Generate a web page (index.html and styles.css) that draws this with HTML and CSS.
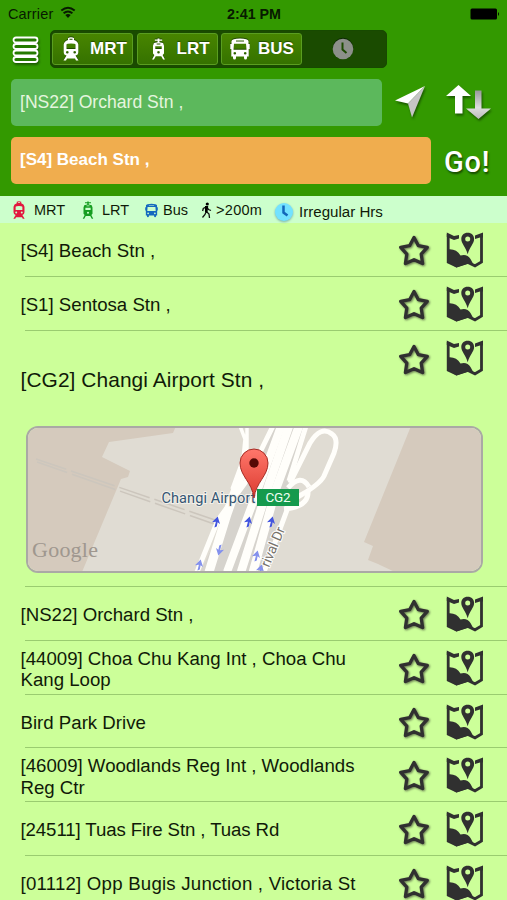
FILE: index.html
```html
<!DOCTYPE html>
<html lang="en">
<head>
<meta charset="utf-8">
<title>Transit planner</title>
<link rel="stylesheet" href="styles.css">
</head>
<body>
<svg class="defs" width="0" height="0" aria-hidden="true">
  <defs>
    <symbol id="star" viewBox="0 0 36 36">
      <path d="M18 4.5L22.4 12.700L31.300 14.300L25.200 21.100L26.600 30.500L18 26.700L9.400 30.500L10.800 21.100L4.700 14.300L13.600 12.700Z" fill="none" stroke="#303030" stroke-width="3.300" stroke-linejoin="round"/>
    </symbol>
    <symbol id="map" viewBox="0 0 38 36">
      <path d="M2.200 2V30L10.500 34L22 30.500L29 33.800L35.500 30V2" fill="none" stroke="#303030" stroke-width="2.800"/>
      <path d="M.8 .5L8 4L13 3V6.500L8 8L.8 5ZM29 3.500L37 .5V5.500L34 5.500L29 7Z" fill="#303030"/>
      <path d="M1 17.500Q10 16 14.500 23.500Q21 21.500 24.500 27L27.500 32.500L22 31.500L10.500 35.500L1 29.500Z" fill="#303030"/>
      <path fill-rule="evenodd" d="M21.700 .8C17.800 .8 15.300 3.500 15.300 7C15.300 11.500 19.500 14.500 21.700 22.300C23.900 14.500 28.100 11.500 28.100 7C28.100 3.500 25.600 .8 21.700 .8ZM21.700 4.400A2.500 2.500 0 1 1 21.700 9.400A2.500 2.500 0 1 1 21.700 4.400Z" fill="#303030"/>
    </symbol>
    <symbol id="train" viewBox="0 0 16 24">
      <path fill="currentColor" fill-rule="evenodd" d="M5 1Q8-.5 11 1V3Q14.800 4 15.300 7.500V15Q15.300 18 12.500 18.500L15.500 23.500H13L12 21.500H4L3 23.500H.5L3.500 18.500Q.7 18 .7 15V7.500Q1.200 4 5 3ZM6.500 1.800V2.800H9.500V1.800ZM3.500 7.500V12H12.500V7.500Q12 6.500 8 6.500T3.500 7.500ZM4.300 14A1.300 1.300 0 1 0 4.300 16.600A1.300 1.300 0 1 0 4.300 14ZM11.700 14A1.300 1.300 0 1 0 11.700 16.600A1.300 1.300 0 1 0 11.700 14Z"/>
    </symbol>
    <symbol id="tram" viewBox="0 0 16 24">
      <path fill="currentColor" fill-rule="evenodd" d="M4 1.500H7V.5H9V1.500H12V3H9V4.500L13 5.500L14 8.500V17L12.500 18.500L15 23.500H13L11 20H5L3 23.500H1L3.500 18.500L2 17V8.500L3 5.500L7 4.500V3H4ZM4.500 9V12H11.500V9ZM8 14.200A1.400 1.400 0 1 0 8 17A1.400 1.400 0 1 0 8 14.200ZM6 6V7H10V6Z"/>
    </symbol>
    <symbol id="bus" viewBox="0 0 20 22">
      <path fill="currentColor" fill-rule="evenodd" d="M1.500 3Q2 .5 10 .5T18.500 3V6H19.700V11H18.700V18.500H17V20Q17 21.500 15.500 21.500T14 20V18.500H6V20Q6 21.500 4.500 21.500T3 20V18.500H1.300V11H.3V6H1.500ZM6 2.500V3.400H14V2.500ZM4 5.800L3.500 11.700H16.500L16 5.800ZM4.800 14A1.300 1.300 0 1 0 4.800 16.600A1.300 1.300 0 1 0 4.800 14ZM15.200 14A1.300 1.300 0 1 0 15.200 16.600A1.300 1.300 0 1 0 15.200 14Z"/>
    </symbol>
    <linearGradient id="metal" x1="0" y1="0" x2="0" y2="1"><stop offset="0" stop-color="#999"/><stop offset=".6" stop-color="#ddd"/><stop offset="1" stop-color="#bbb"/></linearGradient>
    <linearGradient id="pin" x1="0" y1="0" x2="0" y2="1"><stop offset="0" stop-color="#ff776b"/><stop offset="1" stop-color="#dc3b30"/></linearGradient>
    <g id="way"><path d="M-1.600 5.500L-.1-.2L-4 .3L1.700-5.500L4 2L1.600.2L.8 4.500Z"/></g>
  </defs>
</svg>

<div class="app">
  <header class="header">
    <div class="status">
      <div class="carrier">Carrier
        <svg width="16" height="13" viewBox="0 0 16 13"><path d="M1.300 4.600Q8-1 14.700 4.600M3.600 7.300Q8 3.600 12.400 7.300" fill="none" stroke="#071a00" stroke-width="1.900"/><path d="M5.300 9.100Q8 7 10.700 9.100L8 12Z" fill="#071a00"/></svg>
      </div>
      <div class="time">2:41 PM</div>
      <div class="power"><svg width="30" height="12" viewBox="0 0 30 12"><rect x=".5" y=".5" width="26.500" height="11" rx="1.500"/><path d="M28 4Q30 6 28 8Z"/></svg></div>
    </div>
    <div class="toolbar">
      <svg class="menu" width="28" height="28" viewBox="0 0 28 28"><g fill="#247a00" stroke="#fff" stroke-width="1.800"><rect x="1.500" y="1.500" width="24" height="5" rx="2.500"/><rect x="1.500" y="8" width="24" height="5" rx="2.500"/><rect x="1.500" y="14.500" width="24" height="5" rx="2.500"/><rect x="1.500" y="21" width="24" height="5" rx="2.500"/></g></svg>
      <div class="segments">
        <div class="segment"><svg width="16" height="24"><use href="#train"/></svg><span>MRT</span></div>
        <div class="segment seg-lrt"><svg width="15" height="22"><use href="#tram"/></svg><span>LRT</span></div>
        <div class="segment seg-bus"><svg width="20" height="22"><use href="#bus"/></svg><span>BUS</span></div>
        <div class="segment-off"><svg width="22" height="22" viewBox="0 0 22 22"><circle cx="11" cy="11" r="10.300" fill="#8c908a"/><path d="M10.500 4.500V11.500L14.500 15" fill="none" stroke="#1c4a00" stroke-width="2"/></svg></div>
      </div>
    </div>
    <div class="route">
      <div class="field from">[NS22] Orchard Stn ,</div>
      <svg class="shadow locate" width="32" height="34" viewBox="0 0 32 34"><path d="M31 1L1 15.500L14 18.500Z" fill="#fff"/><path d="M31 1L14 18.500L18 32.500Z" fill="#c5c5c5"/></svg>
      <svg class="shadow swap" width="45" height="34" viewBox="0 0 45 34"><path d="M29 5.500H35.500V23.500H45L32.500 34L20 23.500H29Z" fill="url(#metal)"/><path d="M12.500 0L25 11H16.500V28.500H9V11H0Z" fill="#fff"/></svg>
    </div>
    <div class="route">
      <div class="field to">[S4] Beach Stn ,</div>
      <div class="go">Go!</div>
    </div>
  </header>

  <div class="legend">
    <svg class="red" width="12" height="18"><use href="#train"/></svg><span class="l-mrt">MRT</span>
    <svg class="green" width="12" height="18"><use href="#tram"/></svg><span class="l-lrt">LRT</span>
    <svg class="blue" width="13" height="15"><use href="#bus"/></svg><span class="l-bus">Bus</span>
    <svg width="11" height="17" viewBox="0 0 11 17"><circle cx="6.300" cy="2" r="1.600"/><path d="M5.800 4L5.200 9.200L8 12L8.500 16M5.200 9.500L4 12.500L1.500 15.500M5.500 4.700L2.300 6.500L1.600 9M6 5L7.500 7.500L10 8.500" fill="none" stroke="#111" stroke-width="1.300"/><path d="M4 4H7.200L6.500 10H4Z"/></svg><span class="l-walk">&gt;200m</span>
    <svg class="clock" width="20" height="20" viewBox="0 0 20 20"><circle cx="10" cy="10" r="9" fill="#73e2ff"/><path d="M9.500 3.500V10.500L13.500 13.500" fill="none" stroke="#1267ba" stroke-width="2.500"/></svg><span class="l-hours">Irregular Hrs</span>
  </div>

  <main class="list">
    <div class="row"><p>[S4] Beach Stn ,</p><svg class="star"><use href="#star"/></svg><svg class="map"><use href="#map"/></svg></div>
    <div class="row"><p>[S1] Sentosa Stn ,</p><svg class="star"><use href="#star"/></svg><svg class="map"><use href="#map"/></svg></div>
    <section class="expanded">
      <div class="summary"><p>[CG2] Changi Airport Stn ,</p><svg class="star"><use href="#star"/></svg><svg class="map"><use href="#map"/></svg></div>
      <div class="mapbox">
        <svg width="453" height="143" viewBox="28 429 453 143">
          <rect x="26" y="427" width="456" height="146" fill="#e0dcd3"/>
          <path d="M26 427H176L173 434L109 443L102 458L130 472L128 478L121 480L82 573H26Z" fill="#d5cabd"/>
          <path d="M411 427H482V573H395L380 566L378 565L368 561L373 547L364 543Z" fill="#d5cabd"/>
          <path d="M36 460L215 521M37 463L214 525" fill="none" stroke="#ccc6bd" stroke-width="1.500" stroke-dasharray="32 5 46 5 32 5"/>
          <path d="M272 427L246 482L200 573H262L286 510L308 427Z" fill="#d6d3cd"/>
          <g fill="none" stroke="#fffefa">
            <path d="M240 427L245 440L243 460L232 490M247 427L247 455L232 500" stroke-width="3.500"/>
            <path d="M273 427L245 484L218 521L197 573" stroke-width="5"/>
            <path d="M243 470L227 515L209 573" stroke-width="9"/>
            <path d="M281 427L258 490L227 573" stroke-width="8"/>
            <path d="M289 427L269 485L241 573" stroke-width="8.500"/>
            <path d="M299 427L276 490L253 573" stroke-width="8.500"/>
            <path d="M290 484L310 444Q321 426 332 435Q339 440 334 454L324 477Q320 485 301 496L284 506" stroke-width="5"/>
            <path d="M288 489Q301 474 309 488M284 510Q309 508 308 492M290 503L264 573M306 427L289 482" stroke-width="5"/>
          </g>
          <g fill="#4355df"><use href="#way" x="216" y="523"/><use href="#way" x="248" y="523"/><use href="#way" x="271" y="523"/></g>
          <g fill="#8491ed"><use href="#way" transform="translate(220 551) rotate(180)"/><use href="#way" x="199" y="566"/><use href="#way" x="256" y="557"/><use href="#way" x="260" y="571"/></g>
          <text x="161.500" y="503.500" class="place" textLength="94">Changi Airport</text>
          <path d="M254 499C252 483 240 477 240 464A14 14 0 0 1 268 464C268 477 256 483 254 499Z" fill="url(#pin)" stroke="#a52d26" stroke-width="1"/>
          <circle cx="254" cy="464" r="4.700" fill="#540a06"/>
          <rect x="257" y="490" width="42" height="17" fill="#159a4d"/>
          <text x="265.500" y="503" class="code" textLength="25">CG2</text>
          <text transform="translate(269 569) rotate(-67)" class="road" textLength="42">rival Dr</text>
          <text x="32" y="558" class="brand" textLength="66">Google</text>
        </svg>
      </div>
    </section>
    <div class="row low"><p>[NS22] Orchard Stn ,</p><svg class="star"><use href="#star"/></svg><svg class="map"><use href="#map"/></svg></div>
    <div class="row low"><p>[44009] Choa Chu Kang Int , Choa Chu Kang Loop</p><svg class="star"><use href="#star"/></svg><svg class="map"><use href="#map"/></svg></div>
    <div class="row low"><p>Bird Park Drive</p><svg class="star"><use href="#star"/></svg><svg class="map"><use href="#map"/></svg></div>
    <div class="row low"><p>[46009] Woodlands Reg Int , Woodlands Reg Ctr</p><svg class="star"><use href="#star"/></svg><svg class="map"><use href="#map"/></svg></div>
    <div class="row"><p class="tight">[24511] Tuas Fire Stn , Tuas Rd</p><svg class="star"><use href="#star"/></svg><svg class="map"><use href="#map"/></svg></div>
    <div class="row"><p class="wide">[01112] Opp Bugis Junction , Victoria St</p><svg class="star"><use href="#star"/></svg><svg class="map"><use href="#map"/></svg></div>
  </main>
</div>
</body>
</html>
```
FILE: styles.css
```css
* { box-sizing: border-box; }
html, body { margin: 0; height: 100%; overflow: hidden; }
body { font-family: "Liberation Sans", Arial, sans-serif; color: #101a08; background: #ccff99; }
svg { display: block; flex: none; }
p { margin: 0; }
.defs { position: absolute; }
.app { width: 507px; height: 900px; overflow: hidden; background: #ccff99; }

.header { height: 196px; background: #339900; }
.status { display: grid; grid-template-columns: 1fr 1fr 1fr; align-items: center; height: 30px; padding: 0 7px 2px 8px; color: #071a00; }
.carrier { display: flex; gap: 7px; align-items: center; font-size: 14.500px; letter-spacing: .15px; }
.carrier svg { margin-top: -3px; }
.time { text-align: center; font-size: 14.300px; font-weight: bold; }
.power { display: flex; justify-content: flex-end; }
.toolbar { display: flex; height: 38px; padding-left: 12px; }
.menu { margin: 6px 10px 0 0; filter: drop-shadow(1px 2px 1px #1c5c00); }
.segments { display: flex; gap: 3.500px; width: 337px; height: 38px; padding: 2px 1px; border: 1px solid #174900; border-radius: 5px; background: #1a4b00; }
.segment { display: flex; flex: none; align-items: center; width: 81px; padding-left: 10px; gap: 11px; color: #fff; font-size: 17px; font-weight: bold; border: 1px solid #5a9e20; border-radius: 3px; background: linear-gradient(#488500, #357200); text-shadow: 0 -1px 1px #214a00; }
.segment svg { filter: drop-shadow(0 -1px 0 #214a00); }
.seg-lrt { padding-left: 13px; }
.seg-bus { padding-left: 8px; gap: 8px; }
.segment-off { display: flex; flex: 1; align-items: center; justify-content: center; padding-right: 5px; }
.segment-off svg { filter: drop-shadow(0 -1px 0 #0b2900); }

.route { display: flex; align-items: center; height: 47px; margin: 11px 0 0 11px; }
.field { height: 47px; line-height: 46px; padding-left: 9px; border-radius: 5px; font-size: 17.600px; }
.from { width: 371px; background: #5cb85c; color: #e5f5df; }
.to { width: 420px; background: #f0ad4e; color: #fff; font-size: 17px; font-weight: bold; }
.shadow { filter: drop-shadow(1px 2px 1px #1b5800); }
.locate { margin: -1px 0 0 12px; }
.swap { margin: -1px 0 0 20px; }
.go { margin: 2px 0 0 13px; color: #fff; font-family: Roboto, sans-serif; font-weight: 500; font-size: 29px; letter-spacing: .8px; text-shadow: 1px 2px 2px #174b00; }

.legend { display: flex; align-items: center; height: 27px; padding: 1px 0 0 13px; background: #ccffcc; font-size: 14.500px; line-height: 18px; }
.legend span { flex: none; white-space: nowrap; }
.red { color: #e2173e; }
.green { color: #159d20; }
.blue { color: #1469bf; }
.l-mrt { width: 48px; margin-left: 9px; }
.l-lrt { width: 43px; margin-left: 8px; }
.l-bus { width: 38px; margin-left: 5px; }
.l-walk { width: 58px; margin-left: 4px; letter-spacing: .3px; }
.clock { margin-top: 3px; filter: drop-shadow(0 1px 1px #7aaea8); }
.l-hours { margin: 3px 0 0 5px; font-size: 15.100px; }

.row { position: relative; display: flex; align-items: center; height: 53.900px; }
.row::after { content: ""; position: absolute; left: 25px; right: 0; bottom: 0; height: 1px; background: #9acc70; }
.row p { flex: none; width: 359px; margin: 1px 37px 0 0; padding-left: 20.500px; font-size: 18.650px; line-height: 21.500px; }
.row.low p { margin-top: 3px; }
.row .tight { letter-spacing: -.1px; }
.row .wide { letter-spacing: .22px; }
.star { width: 36px; height: 36px; margin-top: 2px; filter: drop-shadow(1px 1px 1px #64754f); }
.map { width: 38px; height: 36px; margin-left: 14px; }
.expanded { position: relative; height: 256px; }
.expanded::after { content: ""; position: absolute; left: 25px; right: 0; bottom: 0; height: 1px; background: #9acc70; }
.summary { display: flex; height: 95px; padding-top: 9px; }
.summary p { flex: none; width: 359px; margin-right: 37px; padding: 28px 0 0 20.500px; font-size: 20.900px; letter-spacing: .08px; }
.mapbox { width: 457px; height: 147px; margin-left: 25.500px; overflow: hidden; border: 2px solid #aaa9a5; border-radius: 12px; }
.place { font: 400 14.500px Roboto, sans-serif; fill: #345674; stroke: #f4f1ea; stroke-width: 2px; paint-order: stroke; }
.code { font: 400 13.500px Roboto, sans-serif; fill: #effff3; }
.road { font: 14px Roboto, sans-serif; fill: #77736c; stroke: #fff; stroke-width: 2px; paint-order: stroke; }
.brand { font: 22px "Liberation Serif", serif; fill: #9f978f; }
```
